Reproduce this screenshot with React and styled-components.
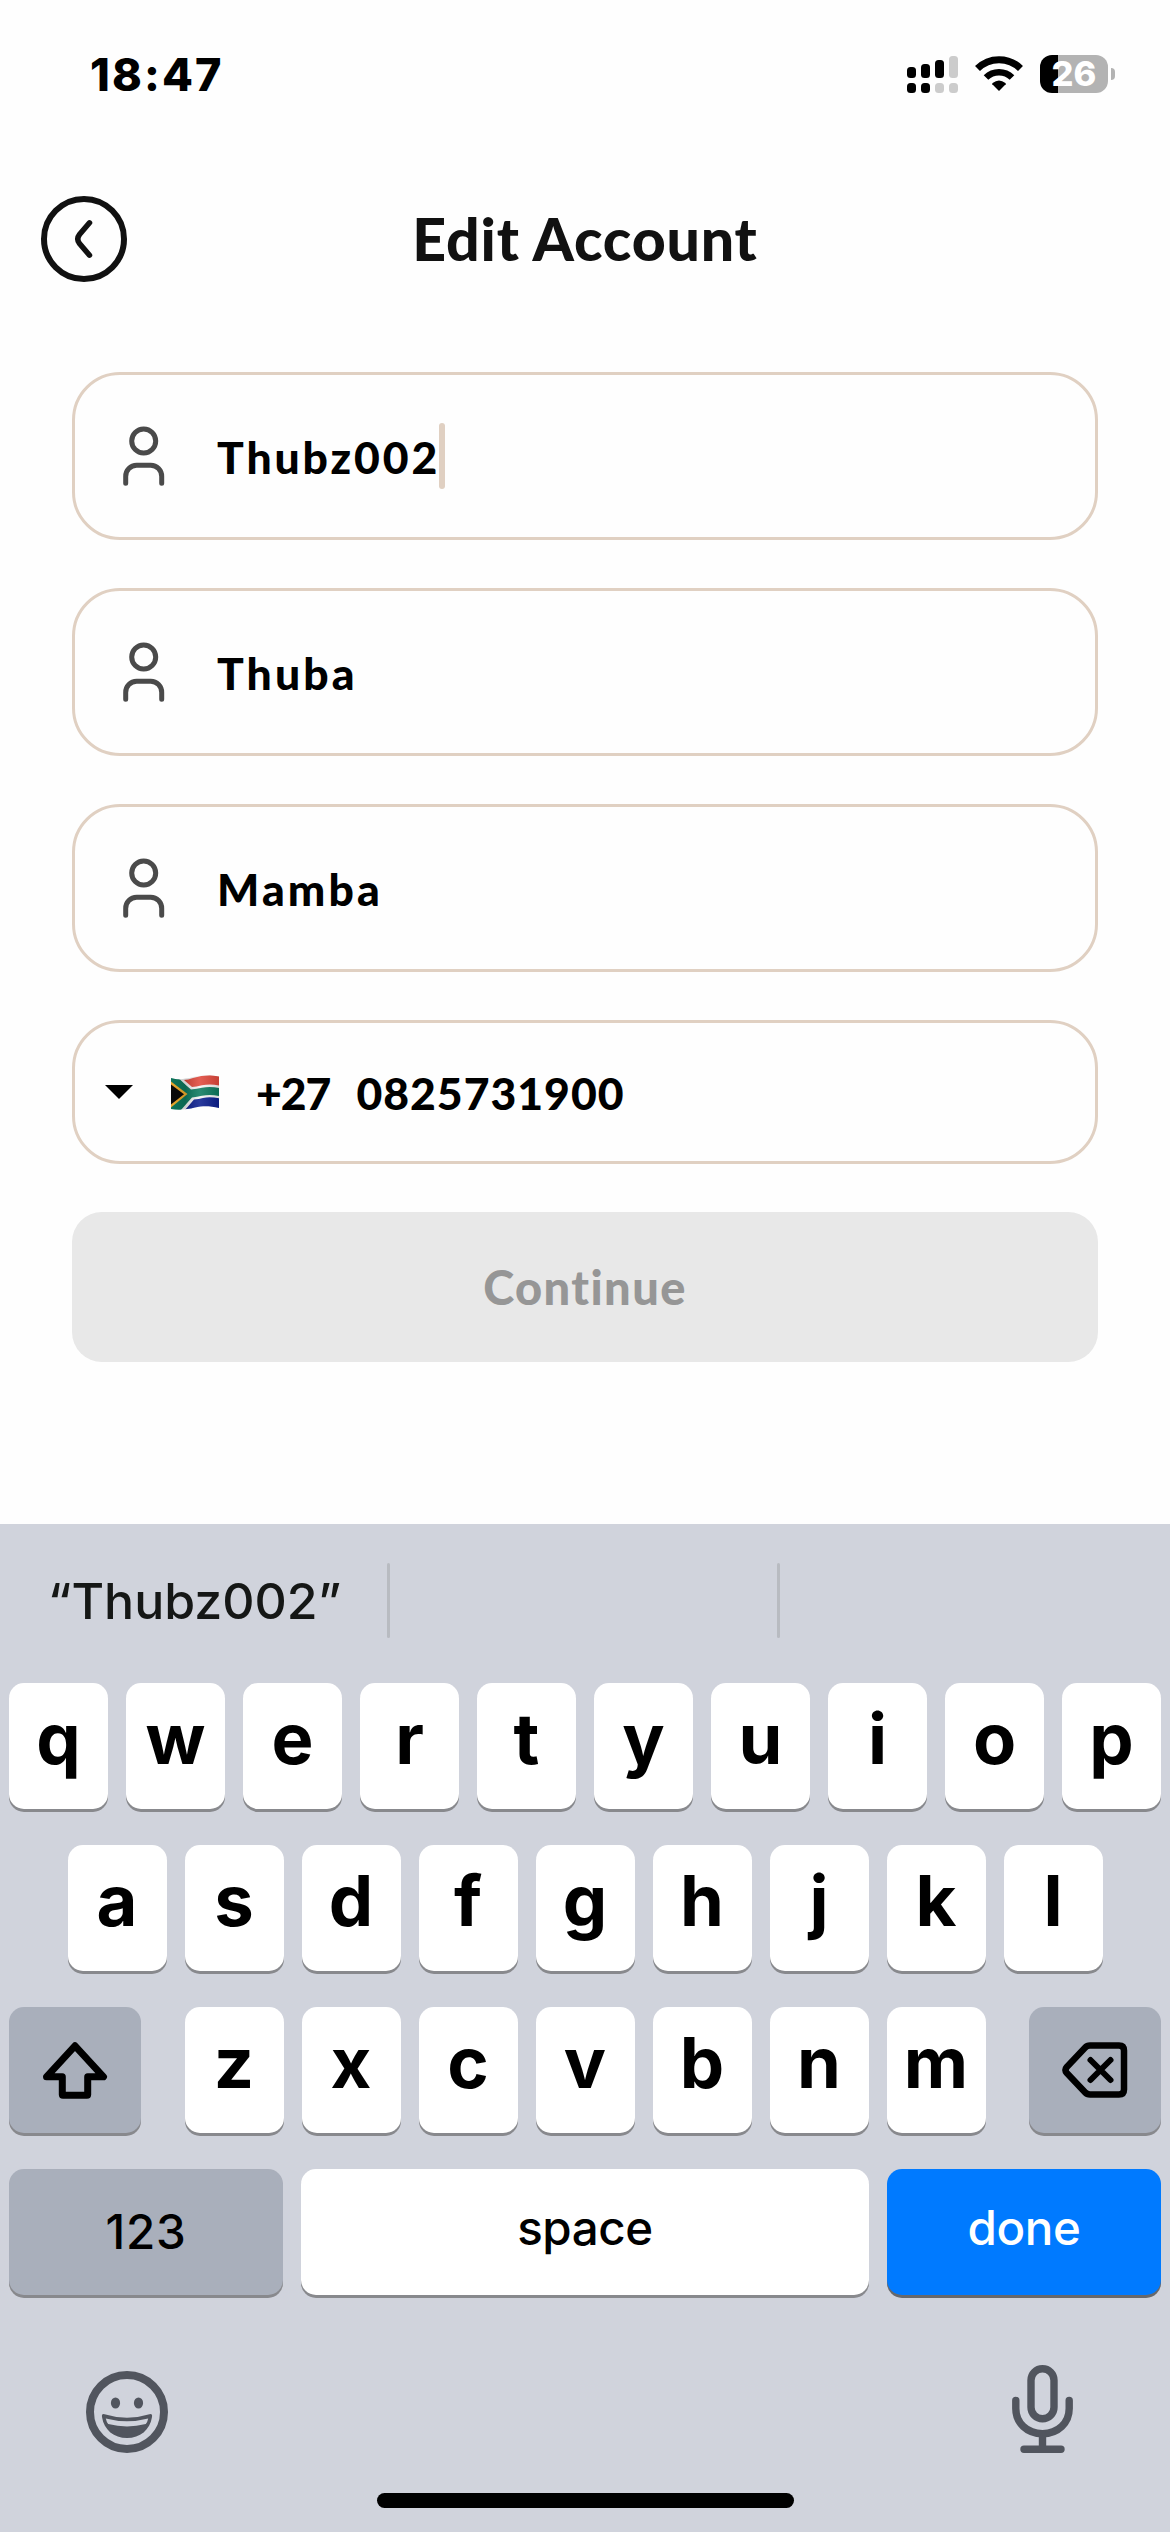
import React from 'react';
import styled, { createGlobalStyle } from 'styled-components';

const GlobalStyle = createGlobalStyle`
  * { box-sizing: border-box; }
  body { margin: 0; background: #fff; }
  svg { display: block; flex: none; }
`;

const Screen = styled.div`
  width: 1170px;
  height: 2532px;
  display: flex;
  flex-direction: column;
  background: #fefefe;
  font-family: Lato, "Open Sans", sans-serif;
  color: #000;
  overflow: hidden;
`;

const StatusBar = styled.div`
  height: 148px;
  padding: 0 55px 0 90px;
  display: flex;
  align-items: center;
  justify-content: space-between;
  font-family: Inter, sans-serif;
`;

const Clock = styled.div`
  font-size: 45px;
  font-weight: 800;
  line-height: 60px;
  letter-spacing: 2.1px;
  padding-top: 1px;
`;

const StatusIcons = styled.div`
  display: flex;
  align-items: center;
  gap: 17px;
`;

const Battery = styled.div`
  display: flex;
  align-items: center;
  gap: 3px;
`;

const BatteryBody = styled.div`
  width: 68px;
  height: 38px;
  border-radius: 12px;
  background: linear-gradient(90deg, #000 18px, #b3b3b3 18px);
  color: #fff;
  font-size: 34.5px;
  font-weight: 800;
  line-height: 38px;
  text-align: center;
`;

const BatteryNub = styled.div`
  width: 4px;
  height: 12px;
  border-radius: 0 4px 4px 0;
  background: #b3b3b3;
`;

const Header = styled.header`
  height: 182px;
  display: grid;
  grid-template-columns: 127px 1fr 127px;
  align-items: center;
`;

const BackButton = styled.button`
  width: 86px;
  height: 86px;
  margin-left: 41px;
  padding: 0;
  border: 6px solid #111;
  border-radius: 50%;
  background: none;
  display: grid;
  place-items: center;
`;

const Title = styled.h1`
  margin: 0;
  text-align: center;
  color: #111;
  font-size: 59px;
  font-weight: 900;
  line-height: 72px;
  letter-spacing: 0.8px;
`;

const Form = styled.main`
  flex: none;
  height: 1194px;
  padding: 42px 72px 0;
  display: flex;
  flex-direction: column;
  gap: 48px;
`;

const Field = styled.div`
  height: ${(p) => (p.$compact ? 144 : 168)}px;
  border: 3px solid #e0d0c2;
  border-radius: 48px;
  display: flex;
  align-items: center;
  padding-left: ${(p) => (p.$compact ? 30 : 48)}px;
`;

const Value = styled.span`
  font-size: 44.5px;
  font-weight: 900;
  line-height: 60px;
  letter-spacing: ${(p) => p.$track || 0}px;
  margin-left: ${(p) => p.$gap || 0}px;
  padding-top: 2px;
`;

const Caret = styled.span`
  width: 6px;
  height: 66px;
  margin-left: -1px;
  border-radius: 3px;
  background: #e0d0c2;
`;

const Triangle = styled.span`
  width: 0;
  border: 14.5px solid transparent;
  border-top-color: #000;
  border-bottom: 0;
`;

const Continue = styled.button`
  height: 150px;
  border: 0;
  padding: 0;
  border-radius: 30px;
  background: #e8e8e8;
  color: #969696;
  font: 900 47px/150px Lato, sans-serif;
  letter-spacing: 1.4px;
`;

const Keyboard = styled.section`
  flex: 1;
  background: #d0d3dc;
  font-family: Inter, sans-serif;
  display: flex;
  flex-direction: column;
`;

const Suggestions = styled.div`
  height: 159px;
  padding: 0 0 6px;
  display: grid;
  grid-template-columns: 387px 3px 387px 3px 1fr;
  align-items: center;
`;

const Suggestion = styled.div`
  padding-left: 2px;
  text-align: center;
  font-size: 50px;
  font-weight: 500;
  color: #151716;
`;

const Divider = styled.div`
  height: 75px;
  border-radius: 2px;
  background: #b8bbc1;
`;

const Keys = styled.div`
  display: flex;
  flex-direction: column;
  gap: 36px;
`;

const KeyRow = styled.div`
  display: flex;
  justify-content: ${(p) => (p.$spread ? 'space-between' : 'center')};
  gap: 18px;
  padding: 0 9px;
`;

const Letters = styled.div`
  display: flex;
  gap: 18px;
`;

const tones = {
  light: ['#fff', '#000'],
  dark: ['#a9afbb', '#000'],
  blue: ['#007aff', '#fff'],
};

const Key = styled.button`
  width: ${(p) => p.$w || 99}px;
  height: 126px;
  border: 0;
  border-radius: 15px;
  display: flex;
  align-items: center;
  justify-content: center;
  background: ${(p) => tones[p.$tone || 'light'][0]};
  color: ${(p) => tones[p.$tone || 'light'][1]};
  box-shadow: 0 3px 0 ${(p) => (p.$tone === 'blue' ? '#66686c' : '#88898d')};
  font-family: inherit;
  font-size: ${(p) => (p.$word ? 47.5 : 70.5)}px;
  font-weight: ${(p) => (p.$word ? 500 : 700)};
  line-height: 84px;
  letter-spacing: ${(p) => p.$track || 0}px;
  padding: 0 0 ${(p) => (p.$lift === undefined ? 14 : p.$lift)}px;
`;

const Tools = styled.div`
  display: flex;
  align-items: flex-start;
  justify-content: space-between;
  padding: 70px 97px 0 86px;
  height: 198px;
`;

const ToolSlot = styled.div`
  padding-top: ${(p) => p.$top || 0}px;
`;

const HomeIndicator = styled.div`
  width: 417px;
  height: 15px;
  border-radius: 8px;
  margin: 0 auto;
  background: #000;
`;

const Signal = () => (
  <svg width="51" height="38" viewBox="0 0 51 38">
    <rect x="0" y="12" width="9" height="11" rx="3.5" />
    <rect x="14" y="9" width="9" height="14" rx="3.5" />
    <rect x="28" y="5" width="9" height="18" rx="3.5" />
    <rect x="42" y="1" width="9" height="22" rx="3.5" fill="#ccc" />
    <rect x="0" y="28" width="9" height="10" rx="3.5" />
    <rect x="14" y="28" width="9" height="10" rx="3.5" />
    <rect x="28" y="28" width="9" height="10" rx="3.5" fill="#ccc" />
    <rect x="42" y="28" width="9" height="10" rx="3.5" fill="#ccc" />
  </svg>
);

const Wifi = () => (
  <svg width="48" height="38" viewBox="0 0 48 38">
    <path d="M2.5 13.5A30.5 30.5 0 0 1 45.5 13.5" fill="none" stroke="#000" strokeWidth="7" />
    <path d="M11 22.5A18.5 18.5 0 0 1 37 22.5" fill="none" stroke="#000" strokeWidth="6.5" />
    <path d="M24 36L17.3 29.2Q17 28.6 17.6 28.1Q24 23 30.4 28.1Q31 28.6 30.7 29.2Z" />
  </svg>
);

const Person = () => (
  <svg width="42" height="60" viewBox="0 0 42 60" fill="none" stroke="#4a4a4a" strokeWidth="5" strokeLinecap="round">
    <circle cx="20.7" cy="15" r="12" />
    <path d="M2.7 57.2V50.5A11 11 0 0 1 13.7 39.3H27.7A11 11 0 0 1 38.7 50.5V57.2" />
  </svg>
);

const FlagWrap = styled.span`
  margin: 1px 0 0 38px;
`;

const Flag = () => (
  <svg width="48" height="35" viewBox="0 0 48 35">
    <defs>
      <clipPath id="cloth">
        <path d="M0 3C8 5.500 14 4 22 2C30 .2 38 -.5 48 1.500V33C38 30.500 31 31 24 32.500C16 34.500 8 35.300 0 34Z" />
      </clipPath>
      <linearGradient id="fold" x1="0" x2="1" y1="0" y2="0">
        <stop offset="0" stopColor="#000" stopOpacity=".05" />
        <stop offset=".3" stopColor="#000" stopOpacity=".16" />
        <stop offset=".6" stopColor="#fff" stopOpacity=".12" />
        <stop offset="1" stopColor="#000" stopOpacity=".12" />
      </linearGradient>
    </defs>
    <g clipPath="url(#cloth)">
      <rect width="48" height="35" fill="#f4f4f4" />
      <path d="M13 5Q17 5 22 3Q34 -1 48 1V10.500Q39 8.500 31 10.300Q25 11.800 21 12Z" fill="#e0483c" />
      <path d="M14 35L23 24.500Q28 24 32 23Q39 21.500 48 23.300V35Z" fill="#0c1f8f" />
      <path d="M0 2L9 4.500Q14 9.500 20 14.500Q26 14 31 12.800Q39 11 48 13V21Q39 19 31 20.800Q26 22 21 22.500Q16 28 10 35H0Z" fill="#0d7a5f" />
      <path d="M0 6.500L16.500 19L0 32.500Z" fill="#f5b02e" />
      <path d="M0 9.500L13 19.200L0 29.500Z" fill="#0a0a0a" />
      <rect width="48" height="35" fill="url(#fold)" />
    </g>
  </svg>
);

const Shift = () => (
  <svg width="66" height="57" viewBox="0 0 66 57" fill="none" stroke="#000" strokeWidth="7" strokeLinejoin="round">
    <path d="M33 3.800L61.500 34.800H45.700V52.500Q45.700 53.200 45 53.200H21Q20.300 53.200 20.300 52.500V34.800H4.500Z" />
  </svg>
);

const Backspace = () => (
  <svg width="66" height="56" viewBox="0 0 66 56" fill="none" stroke="#000" strokeLinejoin="round" strokeLinecap="round">
    <path d="M28 3.500H57Q62 3.500 62 8.500V47.500Q62 52.500 57 52.500H28Q25 52.500 23 50.300L4.800 31Q2.200 28 4.800 25L23 5.700Q25 3.500 28 3.500Z" strokeWidth="6.500" />
    <path d="M28.500 18L48.500 38M48.500 18L28.500 38" strokeWidth="6" />
  </svg>
);

const Smiley = () => (
  <svg width="82" height="82" viewBox="0 0 82 82">
    <circle cx="41" cy="41" r="37" fill="none" stroke="#51555e" strokeWidth="8" />
    <ellipse cx="29.500" cy="32" rx="4.600" ry="5.500" fill="#51555e" />
    <ellipse cx="52.500" cy="32" rx="4.600" ry="5.500" fill="#51555e" />
    <path d="M17.500 43Q41 50.300 64.500 43Q66.500 43 66 46C64 59 54 67 41 67S18 59 16 46Q15.500 43 17.500 43Z" fill="#51555e" />
    <path d="M19.800 47.400Q41 52.900 62.200 47.400Q61.500 50.800 59.800 53Q41 57.800 22.200 53Q20.500 50.800 19.800 47.400Z" fill="#d0d3dc" />
  </svg>
);

const Mic = () => (
  <svg width="61" height="88" viewBox="0 0 61 88" fill="none" stroke="#51555e" strokeWidth="7.400" strokeLinecap="round">
    <rect x="19" y="3.700" width="23" height="50" rx="11.500" />
    <path d="M3.800 35.500V43.500C3.800 58 15 68.700 30.500 68.700S57.200 58 57.200 43.500V35.500" />
    <path d="M30.500 69V84M12 84.200H49" />
  </svg>
);

const renderKeys = (letters) => letters.split('').map((l) => <Key key={l}>{l}</Key>);

export default function App() {
  return (
    <Screen>
      <GlobalStyle />
      <StatusBar>
        <Clock>18:47</Clock>
        <StatusIcons>
          <Signal />
          <Wifi />
          <Battery>
            <BatteryBody>26</BatteryBody>
            <BatteryNub />
          </Battery>
        </StatusIcons>
      </StatusBar>
      <Header>
        <BackButton aria-label="Back">
          <svg width="20" height="40" viewBox="0 0 20 40" fill="none" stroke="#111" strokeWidth="5.500" strokeLinecap="round">
            <path d="M15.500 3.800L5.500 15.500Q2 20 5.500 24.500L15.500 36.200" />
          </svg>
        </BackButton>
        <Title>Edit Account</Title>
      </Header>
      <Form>
        <Field>
          <Person />
          <Value $gap={52} $track={2.9}>Thubz002</Value>
          <Caret />
        </Field>
        <Field>
          <Person />
          <Value $gap={52} $track={3.1}>Thuba</Value>
        </Field>
        <Field>
          <Person />
          <Value $gap={52} $track={3.1}>Mamba</Value>
        </Field>
        <Field $compact>
          <Triangle />
          <FlagWrap><Flag /></FlagWrap>
          <Value $gap={37} $track={-1}>+27</Value>
          <Value $gap={26} $track={1}>0825731900</Value>
        </Field>
        <Continue>Continue</Continue>
      </Form>
      <Keyboard>
        <Suggestions>
          <Suggestion>“Thubz002”</Suggestion>
          <Divider />
          <Suggestion />
          <Divider />
          <Suggestion />
        </Suggestions>
        <Keys>
          <KeyRow>{renderKeys('qwertyuiop')}</KeyRow>
          <KeyRow>{renderKeys('asdfghjkl')}</KeyRow>
          <KeyRow $spread>
            <Key $w={132} $tone="dark" $lift={0} aria-label="Shift"><Shift /></Key>
            <Letters>{renderKeys('zxcvbnm')}</Letters>
            <Key $w={132} $tone="dark" $lift={0} aria-label="Delete"><Backspace /></Key>
          </KeyRow>
          <KeyRow>
            <Key $word $w={274} $tone="dark" $lift={0} $track={0.8}>123</Key>
            <Key $word $w={568} $lift={8} $track={-0.4}>space</Key>
            <Key $word $w={274} $tone="blue" $lift={8} $track={-0.4}>done</Key>
          </KeyRow>
        </Keys>
        <Tools>
          <ToolSlot $top={6}><Smiley /></ToolSlot>
          <ToolSlot><Mic /></ToolSlot>
        </Tools>
        <HomeIndicator />
      </Keyboard>
    </Screen>
  );
}
